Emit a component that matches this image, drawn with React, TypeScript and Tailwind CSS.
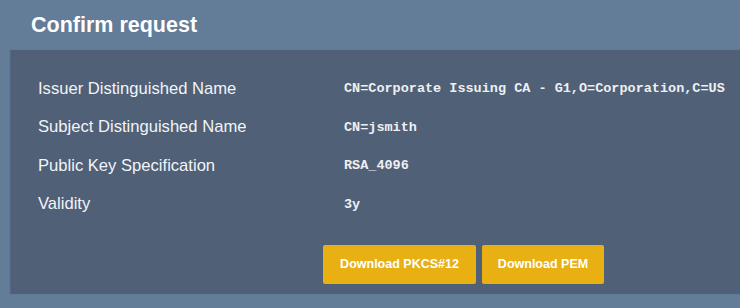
const ROWS = [
  { label: 'Issuer Distinguished Name', value: 'CN=Corporate Issuing CA - G1,O=Corporation,C=US' },
  { label: 'Subject Distinguished Name', value: 'CN=jsmith' },
  { label: 'Public Key Specification', value: 'RSA_4096' },
  { label: 'Validity', value: '3y' },
]

export default function App() {
  return (
    <div className="w-[740px] h-[308px] overflow-hidden bg-[#637c98] font-['Liberation_Sans',Arial,sans-serif]">
      <h1 className="h-[50px] pl-[31px] pt-[11px] text-[21.5px] font-bold text-white leading-[28px]">
        Confirm request
      </h1>

      <div className="ml-[11px] w-[740px] h-[244px] bg-[#4f6077] shadow-[-1px_0_1px_rgba(0,0,0,0.15)] pt-[20px] pl-[27px]">
        {ROWS.map((r) => (
          <div key={r.label} className="h-[38.5px] flex items-center">
            <div className="w-[306px] text-[16.6px] text-[#f2f4f7]">{r.label}</div>
            <div className="font-['Liberation_Mono','Courier_New',monospace] font-bold text-[13.5px] text-[#eef0f3]">
              {r.value}
            </div>
          </div>
        ))}

        <div className="flex gap-[6px] mt-[21px] ml-[285px]">
          <button className="w-[153px] h-[39px] rounded-[2px] bg-[#e8b012] text-white text-[12.5px] font-bold">
            Download PKCS#12
          </button>
          <button className="w-[122px] h-[39px] rounded-[2px] bg-[#e8b012] text-white text-[12.5px] font-bold">
            Download PEM
          </button>
        </div>
      </div>
    </div>
  )
}
